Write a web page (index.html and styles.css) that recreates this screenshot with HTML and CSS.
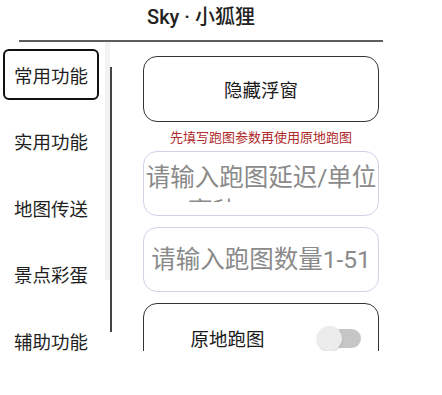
FILE: index.html
```html
<!DOCTYPE html>
<html lang="zh">
<head>
<meta charset="utf-8">
<title>Sky · 小狐狸</title>
<link rel="stylesheet" href="styles.css">
</head>
<body>
<div class="app">
  <div class="header">Sky · 小狐狸</div>
  <div class="rule"></div>
  <div class="main">
    <nav class="sidebar">
      <div class="nav-item active">常用功能</div>
      <div class="nav-item">实用功能</div>
      <div class="nav-item">地图传送</div>
      <div class="nav-item">景点彩蛋</div>
      <div class="nav-item">辅助功能</div>
    </nav>
    <div class="rail">
      <div class="strip"></div>
      <div class="line"></div>
    </div>
    <section class="content">
      <div class="btn">隐藏浮窗</div>
      <div class="hint">先填写跑图参数再使用原地跑图</div>
      <div class="input input-multi">
        <div class="ph-clip">
          <div class="ph-line">请输入跑图延迟/单位</div>
          <div class="ph-line ph-second">毫秒</div>
        </div>
      </div>
      <div class="input input-single">
        <div class="ph-line">请输入跑图数量1-51</div>
      </div>
      <div class="card">
        <span class="card-label">原地跑图</span>
        <span class="switch"><span class="track"></span><span class="thumb"></span></span>
      </div>
    </section>
  </div>
</div>
</body>
</html>
```

FILE: styles.css
```css
* { box-sizing: border-box; }
html, body { margin: 0; padding: 0; background: #fff; }
body {
  font-family: "Roboto", "Noto Sans CJK SC", sans-serif;
  color: #1e1e1e;
}
.app {
  width: 442px;
  height: 395px;
  overflow: hidden;
  background: #fff;
}
.header {
  width: 364px;
  margin-left: 19px;
  height: 40px;
  line-height: 34px;
  text-align: center;
  font-size: 20px;
  font-weight: 500;
  color: #222;
}
.rule {
  width: 364px;
  margin-left: 19px;
  height: 2px;
  background: #5e5e5e;
}
.main {
  display: flex;
  height: 309px;
  overflow: hidden;
}
.sidebar {
  width: 105px;
  padding-top: 7px;
  display: flex;
  flex-direction: column;
}
.nav-item {
  margin-left: 3px;
  width: 96px;
  height: 51px;
  margin-bottom: 15.5px;
  flex-shrink: 0;
  display: flex;
  align-items: center;
  justify-content: center;
  font-family: "Noto Sans CJK SC", sans-serif;
  font-size: 18.5px;
  color: #1f1f1f;
  border: 2px solid transparent;
  border-radius: 6px;
}
.nav-item.active {
  border-color: #111;
}
.rail {
  width: 7px;
  display: flex;
  align-items: flex-start;
}
.strip {
  width: 5px;
  height: 238px;
  background: #f3f3f3;
}
.line {
  width: 1.5px;
  height: 265px;
  margin-top: 25px;
  background: #444;
}
.content {
  width: 236px;
  margin-left: 31px;
  padding-top: 14px;
  display: flex;
  flex-direction: column;
}
.btn {
  height: 66px;
  flex-shrink: 0;
  border: 1.5px solid #333;
  border-radius: 14px;
  display: flex;
  align-items: center;
  justify-content: center;
  font-family: "Noto Sans CJK SC", sans-serif;
  font-size: 18.5px;
  color: #1a1a1a;
}
.hint {
  height: 29px;
  flex-shrink: 0;
  line-height: 29px;
  text-align: center;
  font-family: "Noto Sans CJK SC", sans-serif;
  font-size: 13px;
  color: #b02a2a;
  white-space: nowrap;
}
.input {
  height: 65px;
  flex-shrink: 0;
  border: 1.5px solid #d9cde9;
  border-radius: 14px;
  color: #8a8a8a;
  font-size: 24.5px;
}
.input-multi {
  padding-top: 9px;
}
.ph-clip {
  height: 41px;
  overflow: hidden;
}
.ph-line {
  line-height: 34px;
  text-align: center;
  white-space: nowrap;
}
.ph-second {
  text-align: left;
  padding-left: 44px;
}
.input-single {
  margin-top: 11px;
  display: flex;
  align-items: center;
  justify-content: center;
}
.card {
  margin-top: 11px;
  height: 66px;
  flex-shrink: 0;
  border: 1.5px solid #333;
  border-radius: 14px;
  display: flex;
  align-items: flex-start;
  padding-top: 20px;
  padding-left: 46.5px;
}
.card-label {
  font-family: "Noto Sans CJK SC", sans-serif;
  font-size: 18.5px;
  line-height: 28px;
  color: #1a1a1a;
}
.switch {
  margin-left: 52px;
  margin-top: 1px;
  width: 44px;
  height: 26px;
  display: flex;
  align-items: center;
}
.track {
  width: 30px;
  height: 19px;
  margin-left: 14px;
  border-radius: 10px;
  background: #c6c6c6;
  flex-shrink: 0;
}
.thumb {
  width: 25px;
  height: 25px;
  margin-left: -44px;
  border-radius: 50%;
  background: #ececec;
  box-shadow: 0 1px 2px rgba(0,0,0,0.18);
  flex-shrink: 0;
}
```
